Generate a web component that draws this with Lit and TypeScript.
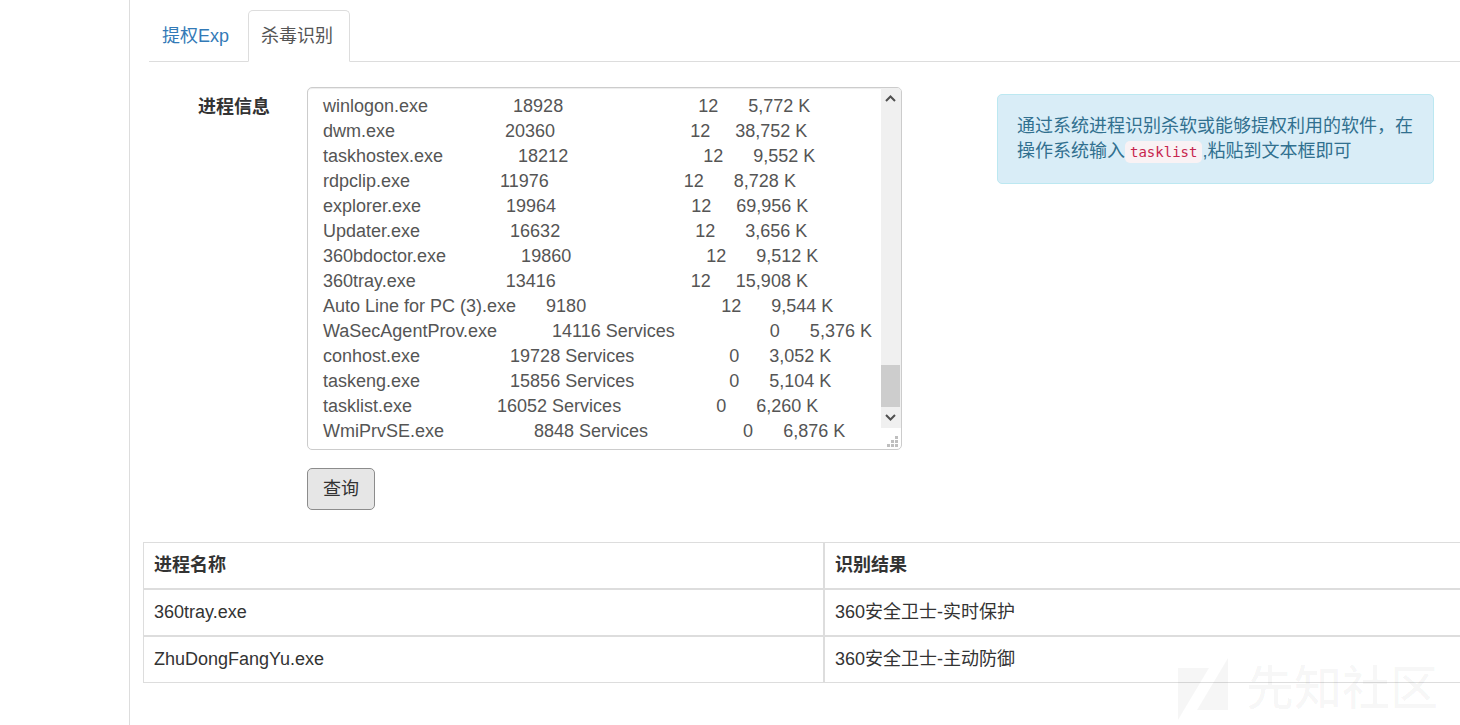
import { LitElement, html, css } from "lit";
import { customElement, state } from "lit/decorators.js";

type Process = [name: string, pid: string, session: string, id: string, memory: string];

const processes: Process[] = [
  ["winlogon.exe", "18928", "", "12", "5,772 K"],
  ["dwm.exe", "20360", "", "12", "38,752 K"],
  ["taskhostex.exe", "18212", "", "12", "9,552 K"],
  ["rdpclip.exe", "11976", "", "12", "8,728 K"],
  ["explorer.exe", "19964", "", "12", "69,956 K"],
  ["Updater.exe", "16632", "", "12", "3,656 K"],
  ["360bdoctor.exe", "19860", "", "12", "9,512 K"],
  ["360tray.exe", "13416", "", "12", "15,908 K"],
  ["Auto Line for PC (3).exe", "9180", "", "12", "9,544 K"],
  ["WaSecAgentProv.exe", "14116", "Services", "0", "5,376 K"],
  ["conhost.exe", "19728", "Services", "0", "3,052 K"],
  ["taskeng.exe", "15856", "Services", "0", "5,104 K"],
  ["tasklist.exe", "16052", "Services", "0", "6,260 K"],
  ["WmiPrvSE.exe", "8848", "Services", "0", "6,876 K"],
];

// Same column widths as the Windows tasklist command prints.
const toLine = ([name, pid, session, id, memory]: Process) =>
  [name.padEnd(25), pid.padStart(8), session.padEnd(16), id.padStart(11), memory.padStart(12)].join(" ");

@customElement("app-root")
export class AppRoot extends LitElement {
  static styles = css`
    :host {
      display: block;
      position: relative;
      min-height: 100vh;
      overflow: hidden;
      background: #fff;
      color: #333;
      font-family: "Liberation Sans", "Noto Sans CJK SC", sans-serif;
      font-size: 18px;
      line-height: 25px;
    }
    * {
      box-sizing: border-box;
    }
    .page {
      display: flex;
      min-height: 100vh;
    }
    .sidebar {
      flex: 0 0 129px;
    }
    .main {
      flex: 1;
      min-width: 0;
      padding-top: 10px;
      border-left: 1px solid #ddd;
    }
    .tabs {
      display: flex;
      gap: 3px;
      margin-left: 19px;
      border-bottom: 1px solid #ddd;
    }
    .tab {
      margin-bottom: -1px;
      padding: 13px 16px 12px 12px;
      border: 1px solid transparent;
      border-radius: 5px 5px 0 0;
      color: #337ab7;
      text-decoration: none;
    }
    .tab:first-child {
      padding-right: 15px;
    }
    .tab.active {
      border-color: #ddd #ddd #fff;
      background: #fff;
      color: #555;
    }
    .form {
      display: grid;
      grid-template-columns: 140px minmax(0, 632fr) minmax(0, 532fr);
      align-items: start;
      padding: 25px 26px 32px 0;
    }
    .label {
      padding-top: 8px;
      font-weight: bold;
      text-align: right;
    }
    .field {
      margin-left: 37px;
    }
    .box {
      display: flex;
      overflow: hidden;
      border: 1px solid #ccc;
      border-radius: 5px;
      box-shadow: inset 0 1px 1px rgba(0, 0, 0, 0.075);
    }
    .input {
      display: block;
      flex: 1;
      min-width: 0;
      margin: 0;
      padding: 6px 0 5px 15px;
      border: 0;
      outline: 0;
      overflow: auto;
      resize: none;
      scrollbar-width: none;
      background: transparent;
      color: #555;
      font: inherit;
      line-height: 25px;
      white-space: pre;
    }
    .rail {
      display: flex;
      flex: 0 0 20px;
      flex-direction: column;
    }
    .track {
      display: flex;
      flex: 1;
      flex-direction: column;
      justify-content: flex-end;
      background: #f0f0f0;
    }
    .arrow {
      display: block;
      width: 19px;
      height: 21px;
    }
    .space {
      flex: 1;
    }
    .thumb {
      width: 19px;
      height: 42px;
      background: #cdcdcd;
    }
    .grip {
      display: block;
      width: 20px;
      height: 21px;
    }
    .query {
      display: block;
      margin-top: 18px;
      padding: 8px 15px 7px;
      border: 1px solid #8c8c8c;
      border-radius: 5px;
      background: #e6e6e6;
      color: #333;
      font: inherit;
      line-height: 25px;
      cursor: pointer;
    }
    .alert {
      margin: 7px 0 0 95px;
      padding: 19px;
      border: 1px solid #bce8f1;
      border-radius: 5px;
      background: #d9edf7;
      color: #31708f;
    }
    .code {
      padding: 3px 5px;
      border-radius: 5px;
      background: #f9f2f4;
      color: #c7254e;
      font-family: "DejaVu Sans Mono", monospace;
      font-size: 14px;
      line-height: 16px;
    }
    .results {
      width: calc(100% - 13px);
      margin-left: 13px;
      border-collapse: separate;
      border-spacing: 0;
      border: 0;
      table-layout: fixed;
    }
    .cell {
      padding: 10px;
      border: 1px solid #ddd;
      font-weight: normal;
      text-align: left;
    }
    .cell:last-child {
      border-right: 0;
    }
    .cell.head {
      font-weight: bold;
    }
    .name-col {
      width: 681px;
    }
    .watermark {
      position: absolute;
      right: 22px;
      bottom: 4px;
      display: flex;
      align-items: center;
      gap: 18px;
      color: rgba(0, 0, 0, 0.035);
      font-size: 48px;
      font-weight: 500;
      line-height: 64px;
      pointer-events: none;
    }
    .mark {
      display: block;
      width: 50px;
      height: 62px;
    }
  `;

  @state() private text = processes.map(toLine).join("\n");

  private results = [
    ["360tray.exe", "360安全卫士-实时保护"],
    ["ZhuDongFangYu.exe", "360安全卫士-主动防御"],
  ];

  render() {
    return html`
      <div class="page">
        <div class="sidebar"></div>
        <main class="main">
          <nav class="tabs">
            <a class="tab" href="#exp">提权Exp</a>
            <a class="tab active" href="#av" aria-current="page">杀毒识别</a>
          </nav>
          <form class="form" @submit=${(e: Event) => e.preventDefault()}>
            <label class="label" for="tasks">进程信息</label>
            <div class="field">
              <div class="box">
                <textarea
                  class="input"
                  id="tasks"
                  rows="14"
                  spellcheck="false"
                  .value=${this.text}
                  @input=${(e: Event) => (this.text = (e.target as HTMLTextAreaElement).value)}
                ></textarea>
                <div class="rail" aria-hidden="true">
                  <div class="track">
                    <svg class="arrow" viewBox="0 0 19 21">
                      <path d="M5 13 L9.5 8.5 L14 13" fill="none" stroke="#505050" stroke-width="2" />
                    </svg>
                    <div class="space"></div>
                    <div class="thumb"></div>
                    <svg class="arrow" viewBox="0 0 19 21">
                      <path d="M5 8 L9.5 12.5 L14 8" fill="none" stroke="#505050" stroke-width="2" />
                    </svg>
                  </div>
                  <svg class="grip" viewBox="0 0 20 21">
                    <path
                      fill="#bfbfbf"
                      d="M14 8h3v3h-3zM10 12h3v3h-3zM14 12h3v3h-3zM6 16h3v3h-3zM10 16h3v3h-3zM14 16h3v3h-3z"
                    />
                  </svg>
                </div>
              </div>
              <button class="query" type="submit">查询</button>
            </div>
            <div class="alert">
              通过系统进程识别杀软或能够提权利用的软件，在操作系统输入<code class="code">tasklist</code>,粘贴到文本框即可
            </div>
          </form>
          <table class="results">
            <colgroup>
              <col class="name-col" />
              <col />
            </colgroup>
            <thead>
              <tr>
                <th class="cell head" scope="col">进程名称</th>
                <th class="cell head" scope="col">识别结果</th>
              </tr>
            </thead>
            <tbody>
              ${this.results.map(
                ([name, result]) => html`
                  <tr>
                    <td class="cell">${name}</td>
                    <td class="cell">${result}</td>
                  </tr>
                `,
              )}
            </tbody>
          </table>
        </main>
      </div>
      <div class="watermark">
        <svg class="mark" viewBox="0 0 50 62" aria-hidden="true">
          <path fill="currentColor" d="M0 10H31L0 62zM50 0V52H19z" />
        </svg>
        <span>先知社区</span>
      </div>
    `;
  }
}
